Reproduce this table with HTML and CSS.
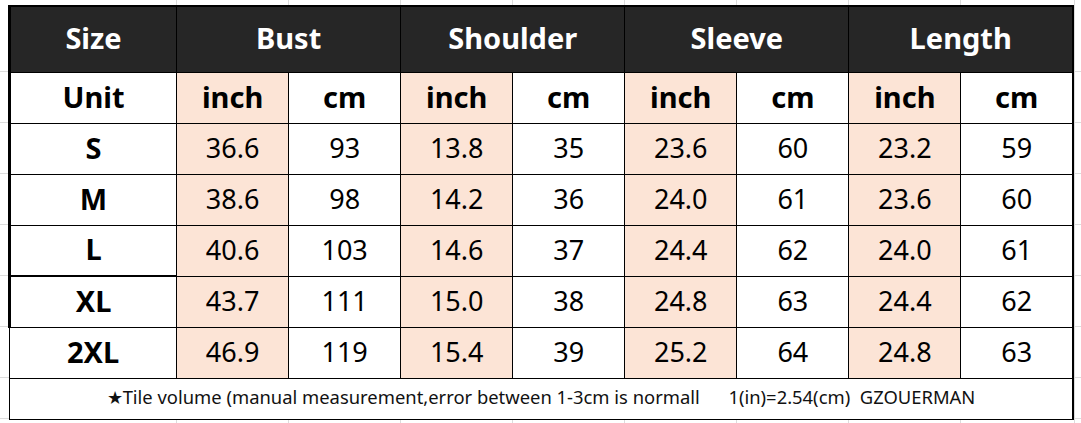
FILE: index.html
```html
<!DOCTYPE html>
<html lang="en">
<head>
    <meta charset="UTF-8">
    <meta name="viewport" content="width=device-width, initial-scale=1.0">
    <title>Size Chart</title>
    <link rel="stylesheet" href="styles.css">
</head>
<body>
    <table class="size-chart">
        <colgroup>
            <col class="col-size">
            <col class="col-val"><col class="col-val">
            <col class="col-val"><col class="col-val">
            <col class="col-val"><col class="col-val">
            <col class="col-val"><col class="col-val">
        </colgroup>
        <tr class="head">
            <th class="edge">Size</th>
            <th colspan="2">Bust</th>
            <th colspan="2">Shoulder</th>
            <th colspan="2">Sleeve</th>
            <th colspan="2">Length</th>
        </tr>
        <tr class="units">
            <td class="label edge">Unit</td>
            <td class="inch">inch</td><td>cm</td>
            <td class="inch">inch</td><td>cm</td>
            <td class="inch">inch</td><td>cm</td>
            <td class="inch">inch</td><td>cm</td>
        </tr>
        <tr>
            <td class="label edge">S</td>
            <td class="inch">36.6</td><td>93</td>
            <td class="inch">13.8</td><td>35</td>
            <td class="inch">23.6</td><td>60</td>
            <td class="inch">23.2</td><td>59</td>
        </tr>
        <tr>
            <td class="label edge">M</td>
            <td class="inch">38.6</td><td>98</td>
            <td class="inch">14.2</td><td>36</td>
            <td class="inch">24.0</td><td>61</td>
            <td class="inch">23.6</td><td>60</td>
        </tr>
        <tr>
            <td class="label edge">L</td>
            <td class="inch">40.6</td><td>103</td>
            <td class="inch">14.6</td><td>37</td>
            <td class="inch">24.4</td><td>62</td>
            <td class="inch">24.0</td><td>61</td>
        </tr>
        <tr class="xl">
            <td class="label edge">XL</td>
            <td class="inch">43.7</td><td>111</td>
            <td class="inch">15.0</td><td>38</td>
            <td class="inch">24.8</td><td>63</td>
            <td class="inch">24.4</td><td>62</td>
        </tr>
        <tr>
            <td class="label">2XL</td>
            <td class="inch">46.9</td><td>119</td>
            <td class="inch">15.4</td><td>39</td>
            <td class="inch">25.2</td><td>64</td>
            <td class="inch">24.8</td><td>63</td>
        </tr>
        <tr class="note">
            <td colspan="9">★Tile volume (manual measurement,error between 1-3cm is normall      1(in)=2.54(cm)  GZOUERMAN</td>
        </tr>
    </table>
</body>
</html>
```

FILE: styles.css
```css
body {
    margin: 0;
    padding: 5px 0 0 8px;
    font-family: "Noto Sans", "Open Sans", sans-serif;
    color: #000;
    background-color: #fff;
    /* faint spreadsheet grid around the chart */
    background-image:
        linear-gradient(#dcdcdc, #dcdcdc), linear-gradient(#dcdcdc, #dcdcdc),
        linear-gradient(#dcdcdc, #dcdcdc), linear-gradient(#dcdcdc, #dcdcdc),
        linear-gradient(#dcdcdc, #dcdcdc), linear-gradient(#dcdcdc, #dcdcdc),
        linear-gradient(#dcdcdc, #dcdcdc), linear-gradient(#dcdcdc, #dcdcdc),
        linear-gradient(#dcdcdc, #dcdcdc), linear-gradient(#dcdcdc, #dcdcdc),
        linear-gradient(#dcdcdc, #dcdcdc), linear-gradient(#dcdcdc, #dcdcdc),
        linear-gradient(#dcdcdc, #dcdcdc), linear-gradient(#dcdcdc, #dcdcdc),
        linear-gradient(#dcdcdc, #dcdcdc), linear-gradient(#dcdcdc, #dcdcdc),
        linear-gradient(#dcdcdc, #dcdcdc);
    background-size:
        1px 100%, 1px 100%, 1px 100%, 1px 100%, 1px 100%,
        1px 100%, 1px 100%, 1px 100%, 1px 100%,
        100% 1px, 100% 1px, 100% 1px, 100% 1px,
        100% 1px, 100% 1px, 100% 1px, 100% 1px;
    background-position:
        176px 0, 288px 0, 400px 0, 512px 0, 624px 0,
        736px 0, 848px 0, 960px 0, 1074px 0,
        0 71px, 0 122px, 0 173px, 0 224px,
        0 275px, 0 326px, 0 377px, 0 418px;
    background-repeat: no-repeat;
    height: 423px;
    box-sizing: border-box;
    overflow: hidden;
}
.size-chart {
    border-collapse: collapse;
    table-layout: fixed;
    width: 1066px;
    border-top: 2px solid #000;
    border-right: 2px solid #000;
}
.col-size {
    width: 167px;
}
.col-val {
    width: 112px;
}
.size-chart th,
.size-chart td {
    border: 1px solid #000;
    padding: 0 0 3px;
    text-align: center;
    background: #fff;
    font-size: 27px;
    line-height: 1;
}
.size-chart .edge {
    border-left: 3px solid #000;
}
.size-chart .inch {
    background: #fce4d6;
}
.size-chart tr {
    height: 51px;
}
.size-chart .head {
    height: 66px;
}
.head th {
    background: #262626;
    color: #fff;
    font-size: 29px;
    font-weight: 700;
}
.units td {
    font-size: 29px;
    font-weight: 700;
}
.size-chart .label {
    font-size: 29px;
    font-weight: 700;
}
.xl .label {
    border-top: 2px solid #000;
}
.size-chart .note {
    height: 41px;
}
.note td {
    font-size: 18.4px;
    white-space: pre;
    color: #111;
    padding: 0 0 2px;
}
```
